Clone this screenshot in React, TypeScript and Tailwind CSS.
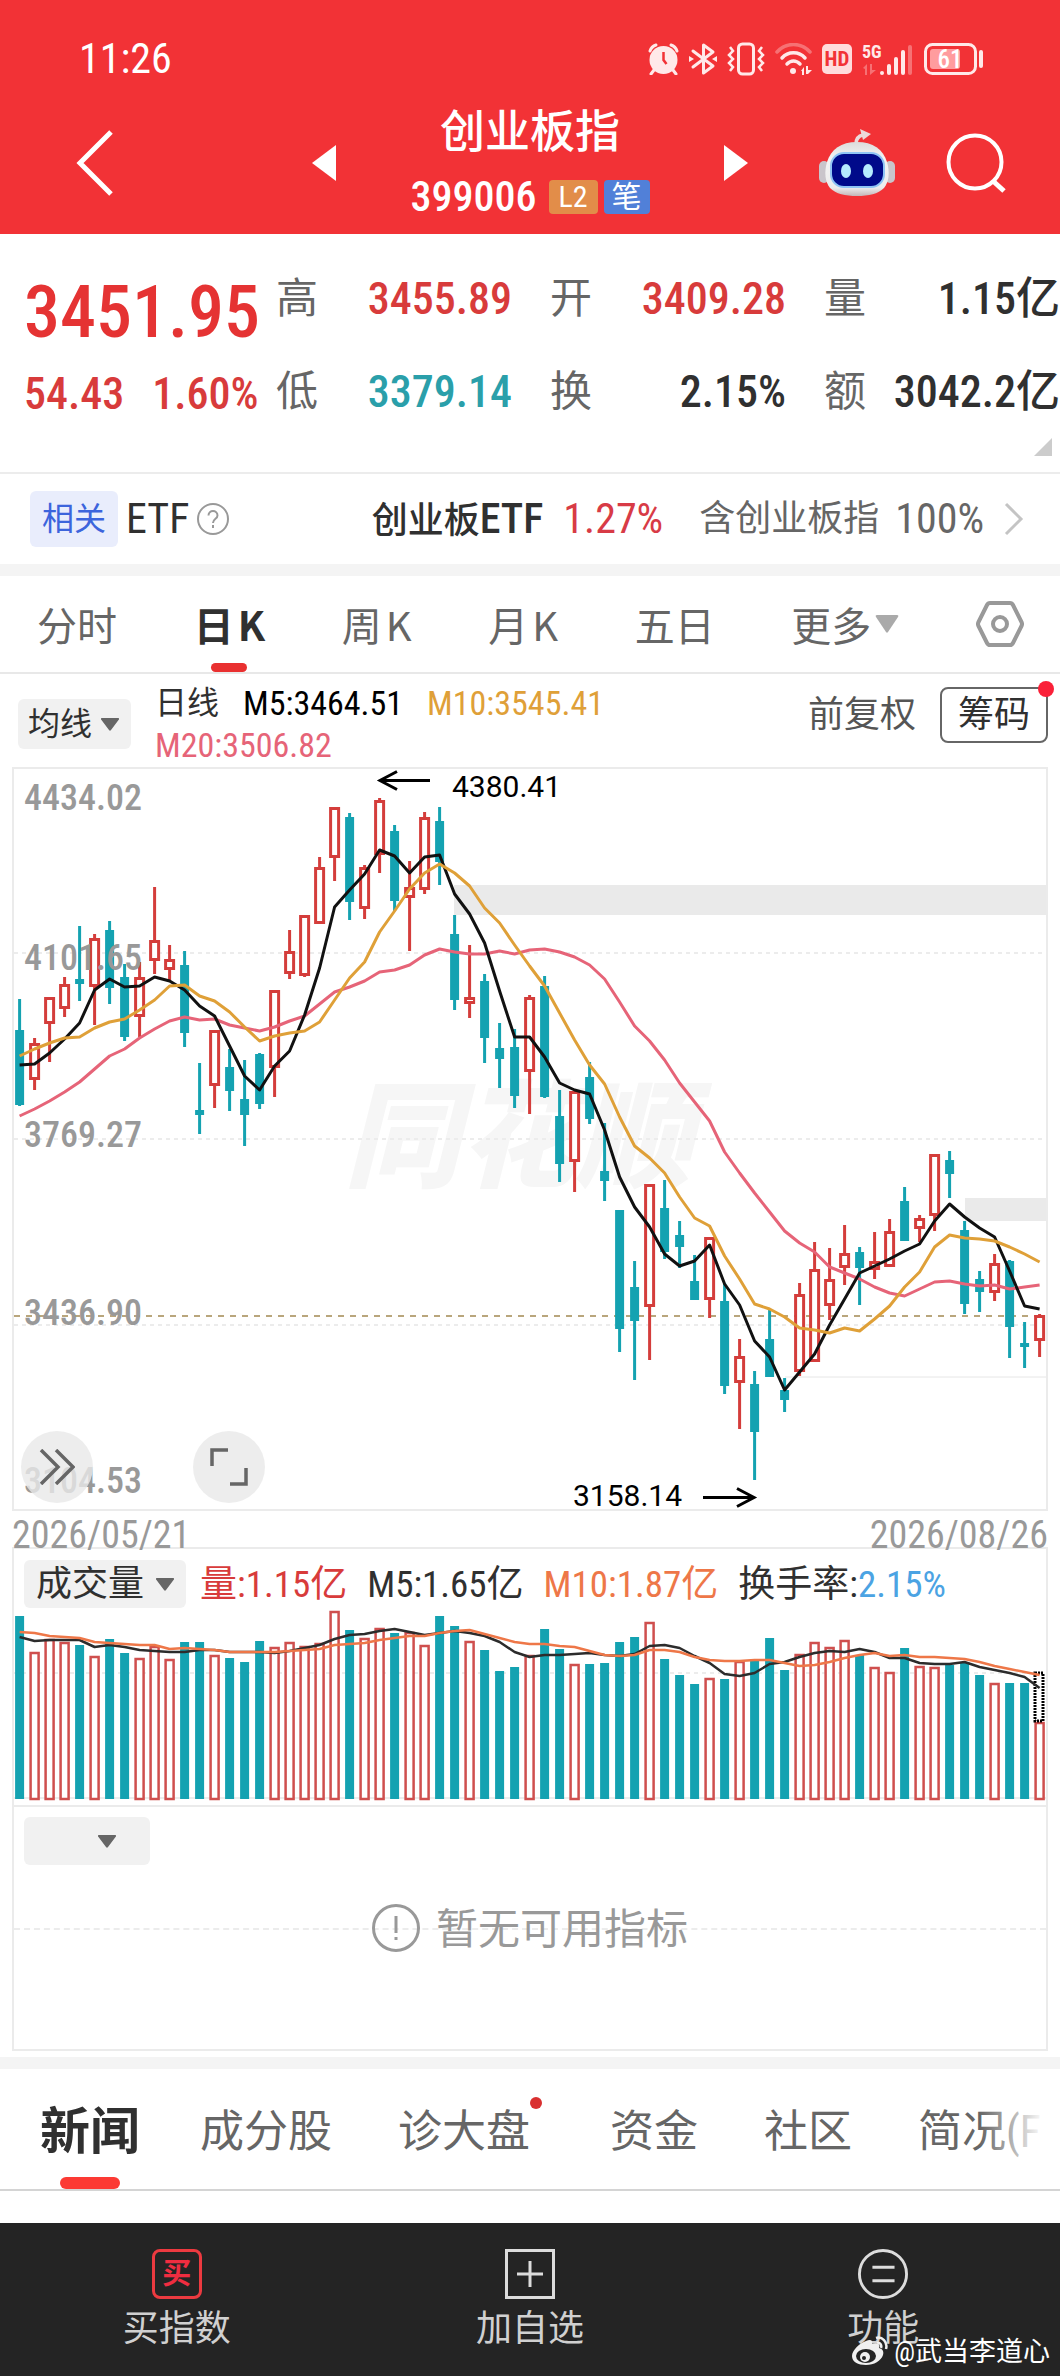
import type { ReactNode } from 'react';
import clsx from 'clsx';

type Candle = [kind: 'up' | 'down', high: number, top: number, bottom: number, low: number];
type Volume = [kind: 'up' | 'down', top: number];

const UP = '#d43d3b';
const DOWN = '#14a2b1';
const FIRST_X = 19.6;
const STEP = 15;

const candles: Candle[] = [
  ['down', 239, 270, 345, 346],
  ['up', 278, 283, 320, 330],
  ['up', 237, 237, 264, 302],
  ['up', 217, 224, 249, 257],
  ['down', 166, 219, 224, 241],
  ['up', 174, 178, 227, 265],
  ['down', 161, 170, 228, 244],
  ['down', 204, 217, 277, 281],
  ['up', 202, 217, 257, 277],
  ['up', 127, 180, 201, 214],
  ['up', 185, 199, 210, 221],
  ['down', 191, 205, 273, 287],
  ['down', 303, 350, 355, 374],
  ['up', 270, 270, 326, 348],
  ['down', 289, 307, 331, 351],
  ['down', 300, 339, 355, 386],
  ['down', 293, 294, 344, 349],
  ['up', 230, 230, 308, 337],
  ['up', 170, 191, 214, 219],
  ['up', 155, 155, 216, 217],
  ['up', 97, 107, 164, 164],
  ['up', 47, 47, 98, 121],
  ['down', 53, 57, 142, 160],
  ['up', 105, 107, 149, 159],
  ['up', 38, 40, 95, 113],
  ['down', 65, 71, 141, 151],
  ['up', 101, 127, 138, 191],
  ['up', 52, 57, 130, 134],
  ['down', 47, 61, 102, 125],
  ['down', 155, 174, 240, 250],
  ['up', 185, 237, 244, 258],
  ['down', 214, 221, 278, 303],
  ['down', 263, 288, 299, 328],
  ['down', 269, 287, 336, 348],
  ['up', 235, 237, 312, 354],
  ['down', 216, 226, 337, 338],
  ['down', 330, 356, 404, 422],
  ['up', 331, 331, 402, 432],
  ['down', 302, 317, 359, 364],
  ['down', 363, 411, 421, 441],
  ['down', 450, 450, 569, 592],
  ['down', 501, 527, 561, 620],
  ['up', 424, 424, 547, 600],
  ['down', 420, 448, 492, 499],
  ['down', 461, 475, 487, 508],
  ['down', 495, 521, 540, 540],
  ['up', 477, 477, 540, 558],
  ['down', 523, 541, 626, 634],
  ['up', 579, 596, 623, 669],
  ['down', 611, 624, 672, 720],
  ['down', 550, 579, 617, 617],
  ['down', 618, 630, 640, 652],
  ['up', 523, 534, 612, 616],
  ['up', 482, 509, 602, 602],
  ['up', 488, 519, 546, 560],
  ['up', 465, 493, 508, 525],
  ['down', 487, 492, 508, 545],
  ['up', 472, 501, 510, 519],
  ['up', 459, 471, 507, 507],
  ['down', 427, 441, 481, 481],
  ['up', 455, 458, 469, 482],
  ['up', 394, 394, 456, 471],
  ['down', 391, 400, 414, 438],
  ['down', 461, 470, 544, 554],
  ['down', 511, 519, 532, 552],
  ['up', 494, 503, 533, 541],
  ['down', 500, 501, 567, 598],
  ['down', 562, 583, 587, 608],
  ['up', 554, 555, 581, 597],
];

const ma5 = [
  305, 304, 293, 279, 263, 230, 219, 227, 226, 217, 221, 230, 246, 256, 286, 316, 330, 306, 291, 255, 208, 147, 130,
  114, 90, 96, 113, 97, 95, 134, 154, 183, 231, 277, 277, 297, 323, 330, 334, 370, 417, 447, 467, 494, 506, 501, 485,
  524, 545, 581, 597, 630, 612, 594, 565, 539, 513, 506, 499, 491, 484, 461, 444, 457, 468, 477, 511, 546, 549,
];

const ma10 = [
  296, 289, 283, 278, 277, 268, 262, 259, 250, 240, 226, 225, 236, 241, 252, 267, 281, 276, 273, 271, 262, 240, 218,
  202, 172, 151, 129, 113, 104, 113, 126, 148, 163, 185, 206, 226, 253, 280, 305, 324, 357, 386, 398, 413, 437, 458,
  466, 496, 519, 544, 549, 557, 568, 570, 573, 568, 571, 559, 546, 527, 512, 487, 475, 478, 479, 481, 487, 494, 502,
];

const ma20 = [
  356, 349, 341, 332, 322, 309, 296, 289, 278, 269, 261, 257, 260, 259, 265, 268, 271, 267, 261, 256, 244, 232, 227,
  221, 212, 210, 205, 195, 189, 192, 194, 194, 191, 194, 190, 189, 192, 197, 205, 219, 242, 266, 281, 300, 323, 342,
  361, 392, 413, 433, 452, 471, 483, 492, 507, 513, 519, 527, 533, 536, 529, 522, 521, 524, 526, 525, 529, 527, 525,
];

const volumes: Volume[] = [
  ['down', 116], ['up', 152], ['up', 139], ['up', 142], ['down', 145], ['up', 156], ['down', 139], ['down', 153],
  ['up', 158], ['up', 146], ['up', 159], ['down', 142], ['down', 142], ['up', 155], ['down', 158], ['down', 162],
  ['down', 141], ['up', 147], ['up', 142], ['up', 146], ['up', 143], ['up', 111], ['down', 130], ['up', 138],
  ['up', 128], ['down', 133], ['up', 132], ['up', 145], ['down', 116], ['down', 126], ['up', 141], ['down', 150],
  ['down', 171], ['down', 167], ['up', 155], ['down', 129], ['down', 149], ['up', 164], ['down', 164], ['down', 163],
  ['down', 142], ['down', 137], ['up', 122], ['down', 159], ['down', 175], ['down', 184], ['up', 178], ['down', 179],
  ['up', 161], ['down', 161], ['down', 138], ['down', 170], ['up', 154], ['up', 142], ['up', 147], ['up', 140],
  ['down', 155], ['up', 167], ['up', 172], ['down', 148], ['up', 166], ['up', 167], ['down', 165], ['down', 162],
  ['down', 175], ['up', 183], ['down', 183], ['down', 183], ['up', 222],
];

const volMa5 = [
  137, 141, 140, 140, 140, 147, 145, 147, 150, 151, 152, 152, 150, 150, 152, 152, 152, 153, 151, 148, 145, 139, 135,
  134, 131, 129, 132, 135, 133, 131, 133, 136, 142, 152, 157, 155, 155, 154, 153, 155, 156, 154, 146, 145, 148, 156,
  163, 174, 176, 173, 164, 162, 157, 153, 151, 152, 149, 152, 158, 158, 163, 164, 164, 162, 167, 170, 173, 177, 188,
];

const volMa10 = [
  132, 133, 136, 137, 138, 142, 143, 144, 145, 145, 149, 148, 149, 150, 152, 152, 152, 152, 151, 150, 149, 145, 144,
  143, 140, 138, 136, 136, 133, 131, 130, 134, 138, 142, 144, 144, 146, 147, 151, 155, 156, 155, 150, 150, 152, 157,
  160, 161, 161, 160, 160, 163, 166, 165, 162, 158, 155, 153, 156, 155, 157, 157, 158, 159, 162, 166, 169, 172, 175,
];

const toPoints = (values: number[]) => values.map((y, i) => `${FIRST_X + i * STEP},${y}`).join(' ');

const quotes = [
  { label: '高', value: '3455.89', color: 'text-[#d83b3b]' },
  { label: '开', value: '3409.28', color: 'text-[#d83b3b]' },
  { label: '量', value: '1.15亿', color: 'text-[#303030]' },
  { label: '低', value: '3379.14', color: 'text-[#2a9faa]' },
  { label: '换', value: '2.15%', color: 'text-[#303030]' },
  { label: '额', value: '3042.2亿', color: 'text-[#303030]' },
];

const StatusIcons = () => (
  <div className="flex items-center gap-2.5 text-[#ffe9e9]">
    {/* Alarm */}
    <svg width="31" height="32" viewBox="0 0 31 32" fill="none" stroke="currentColor">
      <circle cx="15.500" cy="17" r="14" fill="currentColor" stroke="none" />
      <path d="M2 8c1-3 3-5 6-6M29 8c-1-3-3-5-6-6" strokeWidth="3" strokeLinecap="round" />
      <path d="M6 27l-3 4M25 27l3 4" strokeWidth="3" strokeLinecap="round" />
      <path d="M15.500 9v8l3 4" stroke="#f23236" strokeWidth="2.500" />
    </svg>
    {/* Bluetooth */}
    <svg width="28" height="34" viewBox="0 0 28 34" fill="none" stroke="currentColor" strokeWidth="3">
      <path d="M4 9l20 15-9.500 7V3L24 10 4 25" strokeLinejoin="round" strokeLinecap="round" />
      <path d="M0 14l5 3-5 3zM28 14l-5 3 5 3z" fill="currentColor" stroke="none" />
    </svg>
    {/* Vibrate */}
    <svg width="38" height="34" viewBox="0 0 38 34" fill="none" stroke="currentColor" strokeWidth="3">
      <rect x="11.500" y="2" width="15" height="30" rx="4" />
      <path d="M3 5l3 4-4 4 4 4-4 4 4 4-3 4M35 5l-3 4 4 4-4 4 4 4-4 4 3 4" strokeWidth="2.500" />
    </svg>
    {/* Wifi */}
    <svg width="37" height="32" viewBox="0 0 37 32" fill="none" stroke="currentColor" strokeWidth="3.500" strokeLinecap="round">
      <path d="M2 9C11-1 26-1 35 9" opacity="0.350" />
      <path d="M7 15c6-7 17-7 23 0" />
      <path d="M12 21c4-4 9-4 13 0" />
      <circle cx="18" cy="28" r="3" fill="currentColor" stroke="none" />
      <path d="M26 28l3-4v8h-2v-4zM31 31v-8h2v4l4 0-4 4z" fill="currentColor" stroke="none" />
    </svg>
    <svg width="30" height="30" viewBox="0 0 30 30">
      <rect width="30" height="30" rx="5" fill="#ffdcdc" />
      <text x="15" y="22" textAnchor="middle" fontSize="21" fontWeight="700" fill="#f23236">
        HD
      </text>
    </svg>
    {/* Signal */}
    <svg width="52" height="34" viewBox="0 -2 52 34" fill="currentColor" overflow="visible">
      <text x="0" y="14" fontSize="18" fontWeight="700">
        5G
      </text>
      <path d="M1 24l4-4v11H3v-6zM8 31V20h2v6h4z" opacity="0.350" />
      <rect x="18" y="27" width="4" height="4" rx="2" />
      <rect x="25" y="20" width="4" height="11" rx="2" />
      <rect x="32" y="13" width="4" height="18" rx="2" />
      <rect x="39" y="6" width="4" height="25" rx="2" />
      <rect x="46" y="1" width="4" height="30" rx="2" opacity="0.350" />
    </svg>
    {/* Battery */}
    <svg width="60" height="32" viewBox="0 0 60 32" fill="none">
      <rect x="1.500" y="1.500" width="50" height="29" rx="7" stroke="currentColor" strokeWidth="3" />
      <rect x="6" y="6" width="30" height="20" rx="3" fill="#ff9c9e" />
      <rect x="55" y="7" width="4" height="18" rx="2" fill="currentColor" />
      <text x="26" y="25" textAnchor="middle" fontSize="25" fontWeight="500" fill="#fff">
        61
      </text>
    </svg>
  </div>
);

const Robot = () => (
  <svg width="76" height="68" viewBox="0 0 76 68">
    <defs>
      <linearGradient id="head" x1="0" y1="0" x2="0" y2="1">
        <stop offset="0" stopColor="#dcdcdc" />
        <stop offset="0.300" stopColor="#f4f4f4" />
        <stop offset="0.850" stopColor="#ececec" />
        <stop offset="1" stopColor="#c4b6b8" />
      </linearGradient>
    </defs>
    <path d="M37 15c0-5 2-8 7-9" fill="none" stroke="#ecd9d9" strokeWidth="3.500" />
    <path d="M41 0l11 5-8 6z" fill="#ecd9d9" />
    <rect x="0" y="32" width="10" height="22" rx="5" fill="#c9c5cb" />
    <rect x="66" y="32" width="10" height="22" rx="5" fill="#c9c5cb" />
    <path
      d="M38 13c16 0 26 7 30 20 3 10 2 20-3 26-6 6-15 8-27 8s-21-2-27-8c-5-6-6-16-3-26 4-13 14-20 30-20z"
      fill="url(#head)"
    />
    <rect x="12" y="24" width="53" height="34" rx="13" fill="#000a8a" stroke="#8fc4f5" strokeWidth="2" />
    <ellipse cx="27" cy="42" rx="5" ry="7" fill="#b5ecff" />
    <ellipse cx="49" cy="42" rx="5" ry="7" fill="#b5ecff" />
  </svg>
);

const Picker = ({
  label,
  option,
  className,
  caret = 'right-3',
}: {
  label: string;
  option: string;
  className: string;
  caret?: string;
}) => (
  <div className="relative flex items-center">
    <select
      aria-label={label}
      className={clsx('appearance-none rounded-md bg-[#f1f1f1] text-[#303030] outline-none', className)}
    >
      <option>{option}</option>
    </select>
    <svg
      width="18"
      height="13"
      viewBox="0 0 18 13"
      className={clsx('pointer-events-none absolute text-[#666]', caret)}
      fill="currentColor"
      aria-hidden="true"
    >
      <path d="M1 0h16q2 0 .5 2L10 12q-1 1.500-2 0L.5 2Q-1 0 1 0z" />
    </svg>
  </div>
);

const PriceChart = () => (
  <svg viewBox="14 9 1032 740" className="block h-auto w-full">
    <text x="344" y="418" fontSize="116" fontWeight="900" fontStyle="italic" fill="#f6f6f6">
      同花顺
    </text>
    {[193, 379, 565].map((y) => (
      <line key={y} x1="14" x2="1046" y1={y} y2={y} stroke="#ececec" strokeWidth="2" strokeDasharray="4 4" />
    ))}
    <rect x="454" y="125" width="594" height="30" fill="#eaeaea" />
    <rect x="965" y="438" width="83" height="23" fill="#eaeaea" />
    <line x1="785" x2="1046" y1="617" y2="617" stroke="#e6e6e6" />
    <line x1="14" x2="1046" y1="556" y2="556" stroke="#b9a67c" strokeWidth="2" strokeDasharray="6 6" />

    {candles.map(([kind, high, top, bottom, low], i) => {
      const x = FIRST_X + i * STEP;
      if (kind === 'down') {
        return (
          <g key={i} fill={DOWN}>
            <rect x={x - 1.5} y={high} width="3" height={low - high} />
            <rect x={x - 4.5} y={top} width="9" height={bottom - top} />
          </g>
        );
      }
      return (
        <g key={i} stroke={UP} strokeWidth="3" fill="#fff">
          <path d={`M${x} ${high}V${top}M${x} ${bottom}V${low}`} />
          <rect x={x - 4} y={top + 1.5} width="8" height={Math.max(bottom - top - 3, 1)} />
        </g>
      );
    })}

    <g fill="none" strokeWidth="3" strokeLinejoin="round">
      <polyline points={toPoints(ma20)} stroke="#e66478" />
      <polyline points={toPoints(ma5)} stroke="#111" />
      <polyline points={toPoints(ma10)} stroke="#dfa038" />
    </g>

    <g fontSize="36" fontWeight="500" fill="#999">
      <text x="24" y="50">4434.02</text>
      <text x="24" y="210">4101.65</text>
      <text x="24" y="387">3769.27</text>
      <text x="24" y="565">3436.90</text>
      <text x="24" y="733">3104.53</text>
    </g>

    <g fontSize="30" fill="#000" className="font-[Roboto]">
      <text x="452" y="37">4380.41</text>
      <text x="573" y="746">3158.14</text>
    </g>
    <g fill="none" stroke="#000" strokeWidth="3">
      <path d="M430 20.500H381M397 11.500L380 20.500L397 29.500" />
      <path d="M703 737.500H753M737 728.500L754 737.500L737 746.500" />
    </g>
  </svg>
);

const VolumeChart = () => (
  <svg viewBox="14 109 1032 196" className="block h-auto w-full">
    <line x1="14" x2="1046" y1="173" y2="173" stroke="#ececec" strokeWidth="2" strokeDasharray="4 4" />
    <line x1="14" x2="1046" y1="298" y2="298" stroke="#ececec" strokeWidth="2" />
    {volumes.map(([kind, top], i) => {
      const x = FIRST_X + i * STEP;
      return kind === 'down' ? (
        <rect key={i} x={x - 4.5} y={top} width="9" height={299 - top} fill={DOWN} />
      ) : (
        <rect key={i} x={x - 4} y={top + 1} width="8" height={298 - top} fill="#fff" stroke="#cf4f4e" strokeWidth="2.500" />
      );
    })}
    <rect x="1035" y="173" width="8" height="48" fill="#fff" stroke="#000" strokeWidth="3" strokeDasharray="2 1" />
    <g fill="none" strokeWidth="2.500" strokeLinejoin="round">
      <polyline points={toPoints(volMa5)} stroke="#2c2c2c" />
      <polyline points={toPoints(volMa10)} stroke="#ee7748" />
    </g>
  </svg>
);

const PeriodTab = ({ children, active }: { children: ReactNode; active?: boolean }) => (
  <button
    type="button"
    className={clsx(
      'relative flex h-24 items-center gap-1',
      active ? 'font-bold text-[#303030]' : 'text-[#666]',
    )}
  >
    {children}
    {active && <span className="absolute bottom-0 left-1/2 h-[9px] w-9 -translate-x-1/2 rounded-full bg-[#e93030]" />}
  </button>
);

const NewsTab = ({ children, dot }: { children: ReactNode; dot?: boolean }) => (
  <button type="button" className="relative shrink-0 whitespace-nowrap text-[#666]">
    {children}
    {dot && <span className="absolute -right-3 -top-0.5 size-3 rounded-full bg-[#d93030]" />}
  </button>
);

export default function App() {
  return (
    <div className="min-h-screen overflow-hidden bg-white font-['Roboto_Condensed','Noto_Sans_CJK_SC',sans-serif] text-[#303030]">
      {/* Header */}
      <header className="bg-[#f23236] text-white">
        <div className="flex h-[100px] items-center justify-between pl-[79px] pr-[76px] pt-[18px]">
          <span className="text-[42px] leading-10">11:26</span>
          <StatusIcons />
        </div>
        <div className="grid h-[134px] grid-cols-[1fr_436px_1fr] items-center pb-2">
          <button type="button" aria-label="返回" className="justify-self-start pl-[76px]">
            <svg width="38" height="66" viewBox="0 0 38 66" fill="none" stroke="#fff" strokeWidth="5">
              <path d="M35 2L4 33L35 64" />
            </svg>
          </button>
          <div className="flex items-center justify-between">
            <button type="button" aria-label="上一个">
              <svg width="24" height="36" viewBox="0 0 24 36" fill="#fff">
                <path d="M24 0v36L0 18z" />
              </svg>
            </button>
            <div className="flex flex-col items-center gap-3">
              <h1 className="text-[45px] font-medium leading-[56px]">创业板指</h1>
              <div className="flex items-center gap-1.5">
                <span className="mr-1.5 text-[42px] font-medium leading-[48px]">399006</span>
                <span className="w-[49px] rounded-sm bg-[#e28d49] text-center text-[30px] leading-[34px]">L2</span>
                <span className="w-[46px] rounded-sm bg-[#5180d8] text-center text-[30px] leading-[34px]">笔</span>
              </div>
            </div>
            <button type="button" aria-label="下一个">
              <svg width="24" height="36" viewBox="0 0 24 36" fill="#fff">
                <path d="M0 0v36l24-18z" />
              </svg>
            </button>
          </div>
          <div className="flex items-center justify-end gap-[51px] pr-[54px]">
            <button type="button" aria-label="智能助手">
              <Robot />
            </button>
            <button type="button" aria-label="搜索">
              <svg width="60" height="60" viewBox="0 0 60 60" fill="none" stroke="#fff" strokeWidth="4">
                <circle cx="29" cy="29" r="26.500" />
                <path d="M47 48l11 10" strokeWidth="5" />
              </svg>
            </button>
          </div>
        </div>
      </header>

      {/* Quote */}
      <section className="relative flex h-60 border-b-2 border-[#ececec] pl-6 pt-4">
        <div className="w-[252px] shrink-0 text-[#d83b3b]">
          <p className="flex h-[93px] items-center pt-8 text-[72px] font-medium leading-none text-[#e53333]">3451.95</p>
          <p className="flex h-[93px] items-center gap-7 pt-2 text-[44px] font-medium leading-none">
            <span>54.43</span>
            <span>1.60%</span>
          </p>
        </div>
        <dl className="grid flex-1 grid-cols-3 content-start gap-x-[38px] pt-0.5">
          {quotes.map((q) => (
            <div key={q.label} className="flex h-[93px] items-center justify-between whitespace-nowrap leading-none">
              <dt className="text-[42px] text-[#666]">{q.label}</dt>
              <dd className={clsx('text-[44px] font-medium', q.color)}>{q.value}</dd>
            </div>
          ))}
        </dl>
        <svg width="18" height="18" viewBox="0 0 18 18" className="absolute bottom-4 right-2" fill="#ccc">
          <path d="M18 0v18H0z" />
        </svg>
      </section>

      {/* Related ETF */}
      <a href="#etf" className="flex h-[90px] items-center pl-[30px] pr-9 text-[36px] leading-none">
        <span className="rounded-md bg-[#e9edfc] px-3 text-[32px] leading-[56px] text-[#3c64dc]">相关</span>
        <span className="ml-2 text-[42px]">ETF</span>
        <svg width="32" height="32" viewBox="0 0 32 32" className="ml-2" fill="none" stroke="#999" strokeWidth="2">
          <circle cx="16" cy="16" r="15" />
          <path d="M11.500 12.500c0-6 9-6 9 0 0 3.500-4.500 3-4.500 7.500M16 22v3" />
        </svg>
        <span className="ml-auto font-medium">
          创业板<span className="text-[42px]">ETF</span>
        </span>
        <span className="ml-5 text-[42px] text-[#d83b46]">1.27%</span>
        <span className="ml-9 text-[#666]">含创业板指</span>
        <span className="ml-4 text-[42px] text-[#666]">100%</span>
        <svg width="20" height="34" viewBox="0 0 20 34" className="ml-5" fill="none" stroke="#c4c4c4" strokeWidth="3">
          <path d="M2 2l15 15L2 32" />
        </svg>
      </a>

      {/* Period tabs */}
      <nav className="flex items-center justify-between border-b-2 border-t-[12px] border-b-[#e8e8e8] border-t-[#f4f4f4] pl-[37px] pr-9 font-['Noto_Sans_CJK_SC',sans-serif] text-[40px] leading-none">
        <PeriodTab>分时</PeriodTab>
        <PeriodTab active>
          <span>日</span>
          <span>K</span>
        </PeriodTab>
        <PeriodTab>
          <span>周</span>
          <span>K</span>
        </PeriodTab>
        <PeriodTab>
          <span>月</span>
          <span>K</span>
        </PeriodTab>
        <PeriodTab>五日</PeriodTab>
        <PeriodTab>
          更多
          <svg width="24" height="20" viewBox="0 0 24 20" fill="#aaa">
            <path d="M2 1h20q2 0 1 2L13 18q-1 1.500-2 0L1 3Q0 1 2 1z" />
          </svg>
        </PeriodTab>
        <button type="button" aria-label="设置">
          <svg width="48" height="46" viewBox="0 0 48 46" fill="none" stroke="#999" strokeWidth="4">
            <path d="M14 2h20q2 0 3 2l8.500 17q1 2 0 4L37 42q-1 2-3 2H14q-2 0-3-2L2.500 25q-1-2 0-4L11 4q1-2 3-2z" />
            <circle cx="24" cy="23" r="7" />
          </svg>
        </button>
      </nav>

      {/* Averages */}
      <section className="flex h-[93px] pl-[18px] pr-3">
        <div className="pt-[25px]">
          <Picker label="主图指标" option="均线" className="h-[50px] w-[113px] pl-2.5 text-[32px]" />
        </div>
        <div className="ml-6 flex-1 pt-2 text-[34px] leading-[42px]">
          <div className="flex gap-6">
            <span className="text-[32px]">日线</span>
            <span className="text-black">M5:3464.51</span>
            <span className="text-[#dfa038]">M10:3545.41</span>
          </div>
          <div className="text-[#e66478]">M20:3506.82</div>
        </div>
        <div className="flex items-center gap-6 pb-3">
          <button type="button" className="text-[36px] text-[#555]">
            前复权
          </button>
          <button type="button" className="relative h-[56px] rounded-lg border-2 border-[#666] px-4 text-[36px] leading-none">
            筹码
            <span className="absolute -right-2 -top-2 size-4 rounded-full bg-[#fa2038]" />
          </button>
        </div>
      </section>

      <main className="mx-3">
        <div className="relative border-2 border-[#ebebeb]">
          <PriceChart />
          <div className="absolute bottom-1.5 left-[7px] flex gap-[100px]">
            <button
              type="button"
              aria-label="展开"
              className="flex size-[72px] items-center justify-center rounded-full bg-[#e8e8e8]/80"
            >
              <svg width="36" height="36" viewBox="0 0 36 36" fill="none" stroke="#666" strokeWidth="3.500">
                <path d="M2 1l17 17L2 35M17 1l17 17-17 17" />
              </svg>
            </button>
            <button
              type="button"
              aria-label="全屏"
              className="flex size-[72px] items-center justify-center rounded-full bg-[#e8e8e8]/80"
            >
              <svg width="38" height="38" viewBox="0 0 38 38" fill="none" stroke="#666" strokeWidth="3.500">
                <path d="M18 2H2v16M20 36h16V20" />
              </svg>
            </button>
          </div>
        </div>

        <div className="flex h-9 items-end justify-between text-[38px] leading-6 text-[#999]">
          <span>2026/05/21</span>
          <span>2026/08/26</span>
        </div>

        {/* Volume */}
        <section className="border-x-2 border-t-2 border-[#ebebeb]">
          <div className="flex h-[60px] items-center gap-5 whitespace-nowrap pl-2.5 pt-2.5 text-[37px] leading-none">
            <Picker label="副图指标" option="成交量" className="h-12 w-[162px] pl-3 text-[36px]" />
            <span className="-ml-1.5 text-[#d83b3b]">量:1.15亿</span>
            <span>M5:1.65亿</span>
            <span className="text-[#ee7748]">M10:1.87亿</span>
            <span>
              换手率:<span className="text-[#4ba3e3]">2.15%</span>
            </span>
          </div>
          <VolumeChart />
        </section>

        {/* Empty indicator */}
        <section className="relative h-[246px] border-2 border-[#ebebeb]">
          <div className="absolute inset-x-0 top-1/2 border-t-2 border-dashed border-[#ececec]" />
          <div className="absolute left-2.5 top-2.5">
            <Picker label="指标" option="" className="h-12 w-[126px]" caret="right-[34px]" />
          </div>
          <div className="relative flex h-full items-center justify-center gap-4 text-[42px] leading-none text-[#999]">
            <svg width="48" height="48" viewBox="0 0 48 48" fill="none" stroke="#999" strokeWidth="3">
              <circle cx="24" cy="24" r="22.500" />
              <path d="M24 12v17M24 33v3" />
            </svg>
            <span className="pt-1">暂无可用指标</span>
          </div>
        </section>
      </main>

      {/* News tabs */}
      <nav className="relative mt-1.5 border-b-2 border-t-[12px] border-b-[#d4d4d4] border-t-[#f4f4f4]">
        <div className="flex h-[120px] items-center overflow-hidden pl-10 pt-1.5 text-[44px]">
          <button
            type="button"
            className="relative mr-[60px] flex h-full shrink-0 items-center text-[50px] font-bold text-[#303030]"
          >
            新闻
            <span className="absolute bottom-0 left-1/2 h-3 w-[60px] -translate-x-1/2 rounded-full bg-[#fc3a34]" />
          </button>
          <div className="flex">
            <div className="mr-20 flex gap-[66px]">
              <NewsTab>成分股</NewsTab>
              <NewsTab dot>诊大盘</NewsTab>
            </div>
            <div className="flex gap-[66px]">
              <NewsTab>资金</NewsTab>
              <NewsTab>社区</NewsTab>
              <NewsTab>简况(F10)</NewsTab>
            </div>
          </div>
        </div>
        <div className="pointer-events-none absolute inset-y-0 right-0 w-20 bg-linear-to-r from-white/0 to-white to-80%" />
      </nav>

      {/* Bottom bar */}
      <footer className="relative mt-8 grid h-[153px] grid-cols-3 bg-[#242424] text-[36px] leading-none text-[#d0d0d0]">
        <button type="button" className="flex flex-col items-center gap-3 pt-[26px]">
          <span className="flex size-[50px] items-center justify-center rounded-lg border-3 border-[#ec3a40] text-[29px] font-bold text-[#f02d40]">
            买
          </span>
          买指数
        </button>
        <button type="button" className="flex flex-col items-center gap-3 pt-[26px]">
          <svg width="50" height="50" viewBox="0 0 50 50" fill="none" stroke="#dcdcdc" strokeWidth="3">
            <path d="M1.500 1.500h47v47h-47zM25 12v26M12 25h26" />
          </svg>
          加自选
        </button>
        <button type="button" className="flex flex-col items-center gap-3 pt-[26px]">
          <svg width="50" height="50" viewBox="0 0 52 52" fill="none" stroke="#dcdcdc" strokeWidth="3">
            <circle cx="26" cy="26" r="24.500" />
            <path d="M15 19h23M15 33h23" />
          </svg>
          功能
        </button>
        <div className="absolute bottom-2 right-2.5 flex items-center gap-1.5 text-[27px] leading-8 text-white">
          <svg width="36" height="32" viewBox="0 0 36 32" fill="#f0f0f0">
            <path d="M14 5c4-2 7-1 6 3 5-2 9 0 7 4 4 1 5 4 4 7-2 6-9 10-17 10C6 29 0 26 0 20 0 14 8 7 14 5z" />
            <ellipse cx="14" cy="20" rx="10" ry="7" fill="#242424" />
            <circle cx="13" cy="21" r="5" fill="#f0f0f0" />
            <circle cx="12" cy="22" r="2" fill="#242424" />
            <path d="M24 2c6-2 12 4 10 11M25 7c3-1 5 2 4 5" fill="none" stroke="#f0f0f0" strokeWidth="2.500" />
          </svg>
          <span>@武当李道心</span>
        </div>
      </footer>
    </div>
  );
}
